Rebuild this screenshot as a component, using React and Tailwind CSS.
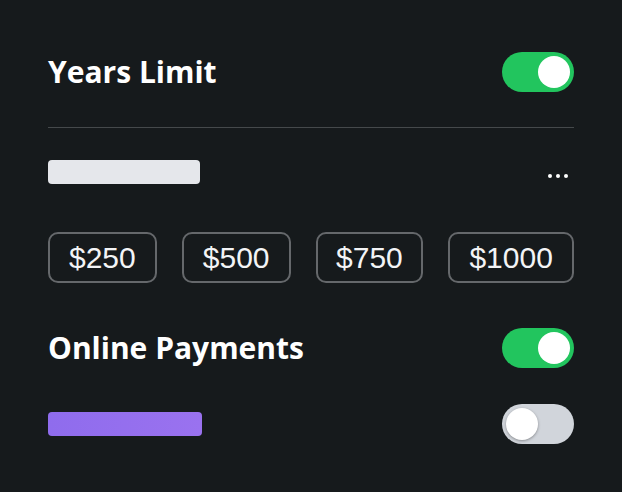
import React from "react";

function Toggle({ on }) {
  return (
    <div
      className={
        "w-[72px] h-10 rounded-full p-1 flex items-center " +
        (on ? "bg-[#22c55e] justify-end" : "bg-[#d1d5db] justify-start")
      }
    >
      <div className={"w-8 h-8 rounded-full bg-white " + (on ? "" : "shadow-[0_1px_3px_rgba(0,0,0,0.35)]")} />
    </div>
  );
}

function Amount({ children, w }) {
  return (
    <div
      className={
        "h-[51px] rounded-[10px] border-2 border-[#65686b] flex items-center justify-center text-[30px] text-[#f3f4f6] " + w
      }
      style={{ fontFamily: "'Liberation Sans', Arial, sans-serif" }}
    >
      {children}
    </div>
  );
}

export default function App() {
  return (
    <div className="w-[622px] h-[492px] bg-[#161a1c] px-12 pt-[52px]" style={{ fontFamily: "'Open Sans', 'Noto Sans', sans-serif" }}>
      <div className="flex items-center justify-between h-10">
        <div className="text-[30px] font-bold text-white leading-none">Years Limit</div>
        <Toggle on />
      </div>
      <div className="mt-[35px] border-t border-[#45494b]" />
      <div className="mt-8 flex items-center justify-between h-6">
        <div className="w-[152px] h-6 rounded bg-[#e5e7eb]" />
        <div className="flex gap-1 mr-[6px] mt-2">
          <div className="w-1 h-1 rounded-full bg-white" />
          <div className="w-1 h-1 rounded-full bg-white" />
          <div className="w-1 h-1 rounded-full bg-white" />
        </div>
      </div>
      <div className="mt-12 flex gap-[25px]">
        <Amount w="w-[109px]">$250</Amount>
        <Amount w="w-[109px]">$500</Amount>
        <Amount w="w-[108px]">$750</Amount>
        <Amount w="w-[126px]">$1000</Amount>
      </div>
      <div className="mt-[45px] flex items-center justify-between h-10">
        <div className="text-[30px] font-bold text-white leading-none">Online Payments</div>
        <Toggle on />
      </div>
      <div className="mt-9 flex items-center justify-between h-10">
        <div className="w-[154px] h-6 rounded bg-gradient-to-r from-[#8f6ced] to-[#9a72ef]" />
        <Toggle on={false} />
      </div>
    </div>
  );
}
